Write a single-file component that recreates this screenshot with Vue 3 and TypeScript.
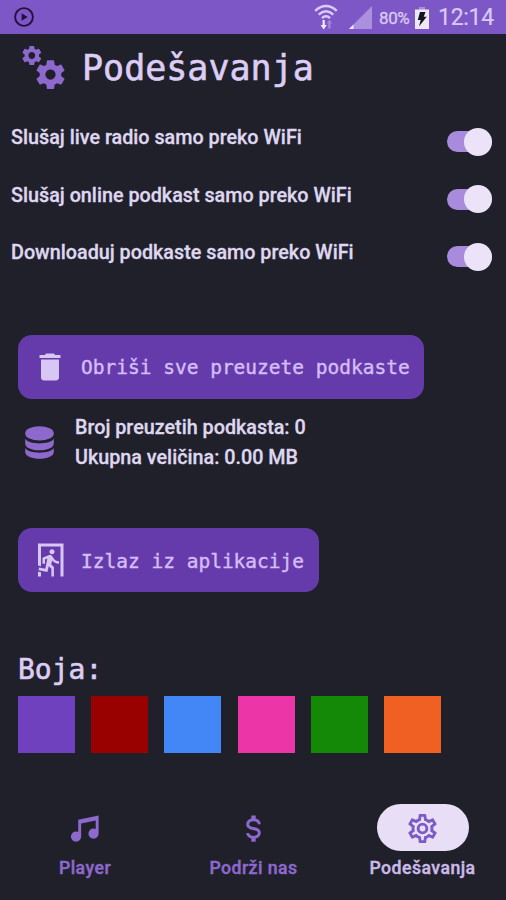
<script setup lang="ts">
import { ref } from 'vue'

interface Toggle {
  label: string
  on: boolean
}

const toggles = ref<Toggle[]>([
  { label: 'Slušaj live radio samo preko WiFi', on: true },
  { label: 'Slušaj online podkast samo preko WiFi', on: true },
  { label: 'Downloaduj podkaste samo preko WiFi', on: true },
])

const swatches: string[] = ['purple', 'red', 'blue', 'pink', 'green', 'orange']

const gear =
  'M19.14 12.94c.04-.3.06-.61.06-.94 0-.32-.02-.64-.07-.94l2.03-1.58c.18-.14.23-.41.12-.61l-1.92-3.32c-.12-.22-.37-.29-.59-.22l-2.39.96c-.5-.38-1.03-.7-1.62-.94l-.36-2.54c-.04-.24-.24-.41-.48-.41h-3.84c-.24 0-.43.17-.47.41l-.36 2.54c-.59.24-1.13.57-1.62.94l-2.39-.96c-.22-.08-.47 0-.59.22L2.74 8.87c-.12.21-.08.47.12.61l2.03 1.58c-.05.3-.09.63-.09.94s.02.64.07.94l-2.03 1.58c-.18.14-.23.41-.12.61l1.92 3.32c.12.22.37.29.59.22l2.39-.96c.5.38 1.03.7 1.62.94l.36 2.54c.05.24.24.41.48.41h3.84c.24 0 .44-.17.47-.41l.36-2.54c.59-.24 1.13-.56 1.62-.94l2.39.96c.22.08.47 0 .59-.22l1.92-3.32c.12-.22.07-.47-.12-.61l-2.01-1.58zM12 15.4c-1.88 0-3.4-1.52-3.4-3.4s1.52-3.4 3.4-3.4 3.4 1.52 3.4 3.4-1.52 3.4-3.4 3.4z'
</script>

<template>
  <div class="screen">
    <header class="status">
      <svg class="play" viewBox="0 0 20 20">
        <circle cx="10" cy="10" r="8.9" fill="none" stroke="#24103f" stroke-width="1.9" />
        <path d="M7.6 6.2v7.6L13.7 10z" fill="#24103f" />
      </svg>
      <div class="status-right">
        <svg class="wifi" viewBox="0 0 24 26">
          <g fill="none" stroke="#dccdf6" stroke-width="2.4">
            <path d="M1.2 6.8Q12 -2.6 22.8 6.8" />
            <path d="M4.7 10.6Q12 4 19.3 10.6" />
            <path d="M8 14.2Q12 10.5 16 14.2" />
          </g>
          <path d="M8.6 16h2.2v5h2l-3.1 4.6L6.6 21h2z" fill="#f1e9ff" />
          <path d="M14.2 24.5v-5h-1.5l2.7-4 2.7 4h-1.5v5z" fill="#a184da" />
        </svg>
        <svg class="signal" viewBox="0 0 23 23">
          <path d="M23 0v23H0z" fill="#ab8fe0" />
          <path d="M4.5 18.5V23H0z" fill="#f1e9ff" />
        </svg>
        <span class="percent">80%</span>
        <svg class="battery" viewBox="0 0 14 22">
          <path d="M4 0h6v3H4z" fill="#aa8fdb" />
          <path d="M0 2.5h14V22H0z" fill="#eee7f8" />
          <path d="M5 5h5.5L8.7 9.8h3L4 19.5l1.7-6.6H2.8z" fill="#16101f" />
        </svg>
        <span class="clock">12:14</span>
      </div>
    </header>

    <main class="content">
      <div class="title">
        <svg class="gears" viewBox="0 0 44 45">
          <path :d="gear" transform="translate(-2.2 -2.5)" />
          <path :d="gear" transform="translate(10.5 10.6) scale(1.5)" />
        </svg>
        <h1>Podešavanja</h1>
      </div>

      <section class="toggles">
        <div v-for="t in toggles" :key="t.label" class="toggle-row">
          <span class="body-text">{{ t.label }}</span>
          <button class="switch" :class="{ on: t.on }" @click="t.on = !t.on">
            <span class="thumb"></span>
          </button>
        </div>
      </section>

      <button class="action delete">
        <svg viewBox="0 0 24 24">
          <path d="M6 19c0 1.1.9 2 2 2h8c1.1 0 2-.9 2-2V7H6v12zM19 4h-3.5l-1-1h-5l-1 1H5v2h14V4z" />
        </svg>
        <span>Obriši sve preuzete podkaste</span>
      </button>

      <div class="storage">
        <svg class="database" viewBox="0 0 29 33">
          <ellipse cx="14.5" cy="7.4" rx="14.3" ry="7.2" />
          <path d="M.2 12.5C3 19 26 19 28.8 12.5V17.5C28.8 26.6 .2 26.6 .2 17.5z" />
          <path d="M.2 22C3 28.2 26 28.2 28.8 22V26C28.8 35 .2 35 .2 26z" />
        </svg>
        <div class="storage-text">
          <span class="body-text">Broj preuzetih podkasta: 0</span>
          <span class="body-text">Ukupna veličina: 0.00 MB</span>
        </div>
      </div>

      <button class="action exit">
        <svg viewBox="0 0 24 24">
          <path d="M13.34,8.17C12.41,8.17 11.65,7.4 11.65,6.47A1.69,1.69 0 0,1 13.34,4.78C14.28,4.78 15.04,5.54 15.04,6.47C15.04,7.4 14.28,8.17 13.34,8.17M10.3,19.93L4.37,18.75L4.71,17.05L8.86,17.9L10.21,11.04L8.69,11.64V14.5H7V10.54L11.4,8.67L12.07,8.59C12.67,8.59 13.17,8.93 13.5,9.44L14.36,10.79C15.04,12 16.39,12.82 18,12.82V14.5C16.14,14.5 14.44,13.67 13.34,12.4L12.84,14.94L14.61,16.63V23H12.92V17.9L11.14,16.21L10.3,19.93M21,23H19V3H6V16.11L4,15.69V1H21V23M6,23H4V19.78L6,20.2V23Z" />
        </svg>
        <span>Izlaz iz aplikacije</span>
      </button>

      <h2>Boja:</h2>
      <div class="swatches">
        <button v-for="s in swatches" :key="s" class="swatch" :class="s"></button>
      </div>
    </main>

    <nav class="nav">
      <a class="nav-item">
        <span class="pill">
          <svg viewBox="0 0 24 24">
            <path d="M21,3V15.5A3.5,3.5 0 0,1 17.5,19A3.5,3.5 0 0,1 14,15.5A3.5,3.5 0 0,1 17.5,12C18.04,12 18.55,12.12 19,12.34V6.47L9,8.6V17.5A3.5,3.5 0 0,1 5.5,21A3.5,3.5 0 0,1 2,17.5A3.5,3.5 0 0,1 5.5,14C6.04,14 6.55,14.12 7,14.34V6L21,3Z" />
          </svg>
        </span>
        <span class="nav-label">Player</span>
      </a>
      <a class="nav-item">
        <span class="pill">
          <svg viewBox="0 0 24 24">
            <path d="M7,15H9C9,16.08 10.37,17 12,17C13.63,17 15,16.08 15,15C15,13.9 13.96,13.5 11.76,12.97C9.64,12.44 7,11.78 7,9C7,7.21 8.47,5.69 10.5,5.18V3H13.5V5.18C15.53,5.69 17,7.21 17,9H15C15,7.92 13.63,7 12,7C10.37,7 9,7.92 9,9C9,10.1 10.04,10.5 12.24,11.03C14.36,11.56 17,12.22 17,15C17,16.79 15.53,18.31 13.5,18.82V21H10.5V18.82C8.47,18.31 7,16.79 7,15Z" />
          </svg>
        </span>
        <span class="nav-label">Podrži nas</span>
      </a>
      <a class="nav-item active">
        <span class="pill">
          <svg viewBox="0 0 24 24">
            <path d="M12,8A4,4 0 0,1 16,12A4,4 0 0,1 12,16A4,4 0 0,1 8,12A4,4 0 0,1 12,8M12,10A2,2 0 0,0 10,12A2,2 0 0,0 12,14A2,2 0 0,0 14,12A2,2 0 0,0 12,10M10,22C9.75,22 9.54,21.82 9.5,21.58L9.13,18.93C8.5,18.68 7.96,18.34 7.44,17.94L4.95,18.95C4.73,19.03 4.46,18.95 4.34,18.73L2.34,15.27C2.21,15.05 2.27,14.78 2.46,14.63L4.57,12.97L4.5,12L4.57,11L2.46,9.37C2.27,9.22 2.21,8.95 2.34,8.73L4.34,5.27C4.46,5.05 4.73,4.96 4.95,5.05L7.44,6.05C7.96,5.66 8.5,5.32 9.13,5.07L9.5,2.42C9.54,2.18 9.75,2 10,2H14C14.25,2 14.46,2.18 14.5,2.42L14.87,5.07C15.5,5.32 16.04,5.66 16.56,6.05L19.05,5.05C19.27,4.96 19.54,5.05 19.66,5.27L21.66,8.73C21.79,8.95 21.73,9.22 21.54,9.37L19.43,11L19.5,12L19.43,13L21.54,14.63C21.73,14.78 21.79,15.05 21.66,15.27L19.66,18.73C19.54,18.95 19.27,19.04 19.05,18.95L16.56,17.95C16.04,18.34 15.5,18.68 14.87,18.93L14.5,21.58C14.46,21.82 14.25,22 14,22H10M11.25,4L10.88,6.61C9.68,6.86 8.62,7.5 7.85,8.39L5.44,7.35L4.69,8.65L6.8,10.2C6.4,11.37 6.4,12.64 6.8,13.8L4.68,15.36L5.43,16.66L7.86,15.62C8.63,16.5 9.68,17.14 10.87,17.38L11.24,20H12.76L13.13,17.39C14.32,17.14 15.37,16.5 16.14,15.62L18.57,16.66L19.32,15.36L17.2,13.81C17.6,12.64 17.6,11.37 17.2,10.2L19.31,8.65L18.56,7.35L16.15,8.39C15.38,7.5 14.32,6.86 13.12,6.62L12.75,4H11.25Z" />
          </svg>
        </span>
        <span class="nav-label">Podešavanja</span>
      </a>
    </nav>
  </div>
</template>

<style>
body {
  margin: 0;
  background: #20202b;
}
</style>

<style scoped>
.screen {
  width: 506px;
  height: 900px;
  display: flex;
  flex-direction: column;
  overflow: hidden;
  background: #20202b;
  color: #dfd7ee;
  font-family: Roboto, sans-serif;
}
svg {
  display: block;
  flex: none;
}
button {
  border: 0;
  padding: 0;
  margin: 0;
}
.status {
  height: 34px;
  flex: none;
  box-sizing: border-box;
  display: flex;
  align-items: center;
  justify-content: space-between;
  padding: 0 12px 0 14px;
  background: #7e57c6;
  color: #d9c9f5;
}
.play {
  width: 20px;
  height: 20px;
}
.status-right {
  display: flex;
  align-items: center;
  white-space: nowrap;
}
.wifi {
  width: 24px;
  height: 26px;
  margin-right: 11px;
}
.signal {
  width: 23px;
  height: 23px;
  margin: 1px 7px 0 0;
}
.percent {
  width: 31px;
  font-size: 17px;
  letter-spacing: -0.4px;
  line-height: 34px;
  padding-top: 2px;
  -webkit-text-stroke: 0.3px currentColor;
}
.battery {
  width: 14px;
  height: 22px;
  margin: 1px 9px 0 5px;
}
.clock {
  width: 56px;
  font-size: 23px;
  letter-spacing: -0.3px;
  line-height: 34px;
  padding-top: 2px;
  -webkit-text-stroke: 0.2px currentColor;
}
.content {
  flex: 1;
  min-height: 0;
  display: flex;
  flex-direction: column;
  align-items: flex-start;
}
.title {
  height: 72px;
  display: flex;
  align-items: flex-start;
}
.gears {
  width: 44px;
  height: 45px;
  margin: 12px 16px 0 22px;
  fill: #8d69cd;
}
h1,
h2 {
  margin: 0;
  font-family: 'DejaVu Sans Mono', monospace;
  font-weight: 400;
  color: #dccdf4;
  -webkit-text-stroke: 0.6px currentColor;
}
h1 {
  font-size: 35px;
  line-height: 68px;
}
.toggles {
  width: 100%;
}
.toggle-row {
  height: 57.7px;
  display: flex;
  align-items: flex-start;
  justify-content: space-between;
  padding: 0 14px 0 11px;
}
.body-text {
  font-size: 19.75px;
  font-weight: 500;
  line-height: 30px;
  margin-top: 17px;
  white-space: nowrap;
  -webkit-text-stroke: 0.3px currentColor;
}
.switch {
  width: 45px;
  height: 21px;
  margin-top: 25px;
  border-radius: 11px;
  display: flex;
  align-items: center;
  background: #55506a;
}
.switch.on {
  justify-content: flex-end;
  background: #a98bdd;
}
.thumb {
  width: 28px;
  height: 28px;
  flex: none;
  border-radius: 50%;
  background: #ece3f8;
}
.action {
  height: 64px;
  flex: none;
  margin-left: 18px;
  box-sizing: border-box;
  padding-left: 14px;
  border-radius: 14px;
  display: flex;
  align-items: center;
  gap: 13px;
  background: #653bac;
  color: #d5bdf5;
  font-family: 'DejaVu Sans Mono', monospace;
  font-size: 19.5px;
  white-space: nowrap;
  -webkit-text-stroke: 0.4px currentColor;
}
.action svg {
  width: 36px;
  height: 36px;
  fill: #d8c6f3;
}
.delete {
  width: 406px;
  margin-top: 56px;
}
.exit {
  width: 301px;
  margin-top: 54px;
}
.exit span {
  padding-top: 2px;
}
.storage {
  height: 75px;
  flex: none;
  display: flex;
  align-items: flex-start;
}
.database {
  width: 29px;
  height: 33px;
  margin: 27px 21px 0 25px;
  fill: #8d69cd;
}
.storage-text {
  display: flex;
  flex-direction: column;
  padding-top: 14px;
}
.storage-text .body-text {
  margin: 0;
}
h2 {
  margin: 58px 0 0 18px;
  font-size: 28px;
  line-height: 40px;
  height: 46px;
}
.swatches {
  display: flex;
  gap: 16.2px;
  padding-left: 18px;
}
.swatch {
  width: 57px;
  height: 57px;
}
.purple { background: #7041be; }
.red { background: #990000; }
.blue { background: #4287f5; }
.pink { background: #ec35a6; }
.green { background: #148807; }
.orange { background: #f06022; }
.nav {
  height: 96px;
  flex: none;
  display: grid;
  grid-template-columns: 168px 169px 169px;
  padding-left: 1px;
}
.nav-item {
  display: flex;
  flex-direction: column;
  align-items: center;
  color: #8d69cd;
}
.pill {
  width: 92px;
  height: 47px;
  border-radius: 24px;
  display: flex;
  align-items: center;
  justify-content: center;
}
.pill svg {
  width: 35px;
  height: 35px;
  margin-top: 2px;
  fill: #8d69cd;
}
.active .pill {
  background: #e8dff7;
}
.active .pill svg {
  fill: #7d5bc4;
}
.nav-label {
  font-size: 17.7px;
  font-weight: 500;
  line-height: 24px;
  margin-top: 5px;
  letter-spacing: 0.45px;
  -webkit-text-stroke: 0.4px currentColor;
}
.active .nav-label {
  color: #cbbae8;
}
</style>
